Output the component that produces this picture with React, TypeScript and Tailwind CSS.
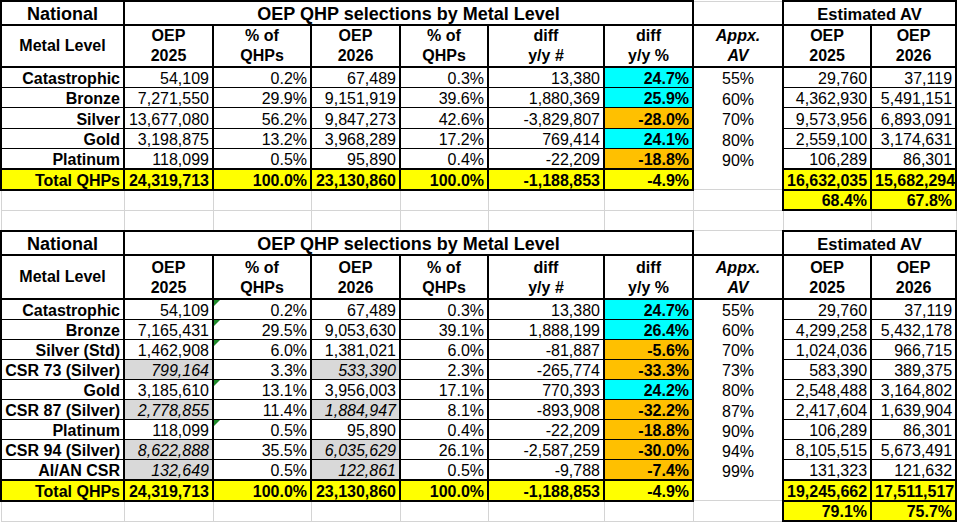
import React from 'react';

type Row = {
  label: string;
  oep25: string;
  pct25: string;
  oep26: string;
  pct26: string;
  diff: string;
  diffPct: string;
  up: boolean;
  av: string;
  est25: string;
  est26: string;
  csr?: boolean;
  flag?: boolean;
};

type Totals = {
  est25: string;
  est26: string;
  share25: string;
  share26: string;
};

const firstRows: Row[] = [
  { label: 'Catastrophic', oep25: '54,109', pct25: '0.2%', oep26: '67,489', pct26: '0.3%', diff: '13,380', diffPct: '24.7%', up: true, av: '55%', est25: '29,760', est26: '37,119' },
  { label: 'Bronze', oep25: '7,271,550', pct25: '29.9%', oep26: '9,151,919', pct26: '39.6%', diff: '1,880,369', diffPct: '25.9%', up: true, av: '60%', est25: '4,362,930', est26: '5,491,151' },
  { label: 'Silver', oep25: '13,677,080', pct25: '56.2%', oep26: '9,847,273', pct26: '42.6%', diff: '-3,829,807', diffPct: '-28.0%', up: false, av: '70%', est25: '9,573,956', est26: '6,893,091' },
  { label: 'Gold', oep25: '3,198,875', pct25: '13.2%', oep26: '3,968,289', pct26: '17.2%', diff: '769,414', diffPct: '24.1%', up: true, av: '80%', est25: '2,559,100', est26: '3,174,631' },
  { label: 'Platinum', oep25: '118,099', pct25: '0.5%', oep26: '95,890', pct26: '0.4%', diff: '-22,209', diffPct: '-18.8%', up: false, av: '90%', est25: '106,289', est26: '86,301' },
];

const secondRows: Row[] = [
  { label: 'Catastrophic', oep25: '54,109', pct25: '0.2%', oep26: '67,489', pct26: '0.3%', diff: '13,380', diffPct: '24.7%', up: true, av: '55%', est25: '29,760', est26: '37,119', flag: true },
  { label: 'Bronze', oep25: '7,165,431', pct25: '29.5%', oep26: '9,053,630', pct26: '39.1%', diff: '1,888,199', diffPct: '26.4%', up: true, av: '60%', est25: '4,299,258', est26: '5,432,178', flag: true },
  { label: 'Silver (Std)', oep25: '1,462,908', pct25: '6.0%', oep26: '1,381,021', pct26: '6.0%', diff: '-81,887', diffPct: '-5.6%', up: false, av: '70%', est25: '1,024,036', est26: '966,715', flag: true },
  { label: 'CSR 73 (Silver)', oep25: '799,164', pct25: '3.3%', oep26: '533,390', pct26: '2.3%', diff: '-265,774', diffPct: '-33.3%', up: false, av: '73%', est25: '583,390', est26: '389,375', csr: true },
  { label: 'Gold', oep25: '3,185,610', pct25: '13.1%', oep26: '3,956,003', pct26: '17.1%', diff: '770,393', diffPct: '24.2%', up: true, av: '80%', est25: '2,548,488', est26: '3,164,802', flag: true },
  { label: 'CSR 87 (Silver)', oep25: '2,778,855', pct25: '11.4%', oep26: '1,884,947', pct26: '8.1%', diff: '-893,908', diffPct: '-32.2%', up: false, av: '87%', est25: '2,417,604', est26: '1,639,904', csr: true },
  { label: 'Platinum', oep25: '118,099', pct25: '0.5%', oep26: '95,890', pct26: '0.4%', diff: '-22,209', diffPct: '-18.8%', up: false, av: '90%', est25: '106,289', est26: '86,301', flag: true },
  { label: 'CSR 94 (Silver)', oep25: '8,622,888', pct25: '35.5%', oep26: '6,035,629', pct26: '26.1%', diff: '-2,587,259', diffPct: '-30.0%', up: false, av: '94%', est25: '8,105,515', est26: '5,673,491', csr: true },
  { label: 'AI/AN CSR', oep25: '132,649', pct25: '0.5%', oep26: '122,861', pct26: '0.5%', diff: '-9,788', diffPct: '-7.4%', up: false, av: '99%', est25: '131,323', est26: '121,632', csr: true },
];

// cell styles
const head = 'border-2 border-black font-bold text-center align-bottom leading-[20px] px-[2px]';
const cell = 'border-x-2 border-y border-black text-right align-bottom leading-[17px] px-[3px] whitespace-nowrap';
const totalCell = 'border-2 border-black bg-[#ffff00] font-bold text-right align-bottom leading-[17px] px-[3px] whitespace-nowrap';
const blank = 'border border-[#d4d4d4]';

const widths = ['w-[123px]', 'w-[89px]', 'w-[98px]', 'w-[89px]', 'w-[88px]', 'w-[116px]', 'w-[89px]', 'w-[90px]', 'w-[88px]', 'w-[85px]'];

const Flag = () => (
  <span className="absolute left-0 top-0 h-0 w-0 border-t-[6px] border-r-[6px] border-t-[#1f8a2a] border-r-transparent" />
);

const Header = ({ tall }: { tall: boolean }) => (
  <>
    <tr className="h-[24px]">
      <td className={`${head} text-[18px]`}>National</td>
      <td colSpan={6} className={`${head} text-[18px]`}>OEP QHP selections by Metal Level</td>
      <td className="border-x-2 border-b-2 border-black border-t border-t-[#d4d4d4]"></td>
      <td colSpan={2} className={`${head} text-[16.5px]`}>Estimated AV</td>
    </tr>
    <tr className={tall ? 'h-[44px]' : 'h-[42px]'}>
      <td className={`${head} align-middle`}>Metal Level</td>
      <td className={head}>OEP<br />2025</td>
      <td className={head}>% of<br />QHPs</td>
      <td className={head}>OEP<br />2026</td>
      <td className={head}>% of<br />QHPs</td>
      <td className={head}>diff<br />y/y #</td>
      <td className={head}>diff<br />y/y %</td>
      <td className={`${head} italic`}>Appx.<br />AV</td>
      <td className={head}>OEP<br />2025</td>
      <td className={head}>OEP<br />2026</td>
    </tr>
  </>
);

const DataRow = ({ row, height }: { row: Row; height: string }) => (
  <tr className={height}>
    <td className={`${cell} font-bold`}>{row.label}</td>
    <td className={`${cell} ${row.csr ? 'bg-[#d9d9d9] italic' : ''}`}>{row.oep25}</td>
    <td className={`${cell} relative`}>
      {row.flag && <Flag />}
      {row.pct25}
    </td>
    <td className={`${cell} ${row.csr ? 'bg-[#d9d9d9] italic' : ''}`}>{row.oep26}</td>
    <td className={cell}>{row.pct26}</td>
    <td className={cell}>{row.diff}</td>
    <td className={`${cell} font-bold ${row.up ? 'bg-[#00ffff]' : 'bg-[#ffc000]'}`}>{row.diffPct}</td>
    <td className="border-x-2 border-black text-center align-bottom leading-[17px]">{row.av}</td>
    <td className={cell}>{row.est25}</td>
    <td className={cell}>{row.est26}</td>
  </tr>
);

const TotalRows = ({ t }: { t: Totals }) => (
  <>
    <tr className="h-[21px]">
      <td className={totalCell}>Total QHPs</td>
      <td className={totalCell}>24,319,713</td>
      <td className={totalCell}>100.0%</td>
      <td className={totalCell}>23,130,860</td>
      <td className={totalCell}>100.0%</td>
      <td className={totalCell}>-1,188,853</td>
      <td className={totalCell}>-4.9%</td>
      <td className="bg-white"></td>
      <td className={totalCell}>{t.est25}</td>
      <td className={totalCell}>{t.est26}</td>
    </tr>
    <tr className="h-[20.5px]">
      {[0, 1, 2, 3, 4, 5, 6, 7].map((i) => (
        <td key={i} className={blank}></td>
      ))}
      <td className={totalCell}>{t.share25}</td>
      <td className={totalCell}>{t.share26}</td>
    </tr>
  </>
);

const BlankRow = () => (
  <tr className="h-[20.5px]">
    {widths.map((w) => (
      <td key={w + 'b'} className={blank}></td>
    ))}
  </tr>
);

export default function App() {
  return (
    <div className="h-[522px] w-[960px] overflow-hidden bg-white font-['Liberation_Sans',Arial,sans-serif] text-[16px] text-black">
      <table className="w-[955px] table-fixed border-collapse">
        <colgroup>
          {widths.map((w, i) => (
            <col key={i} className={w} />
          ))}
        </colgroup>
        <tbody>
          <Header tall={false} />
          {firstRows.map((r) => (
            <DataRow key={'a' + r.label} row={r} height="h-[20.4px]" />
          ))}
          <TotalRows t={{ est25: '16,632,035', est26: '15,682,294', share25: '68.4%', share26: '67.8%' }} />
          <BlankRow />

          <Header tall={true} />
          {secondRows.map((r) => (
            <DataRow key={'b' + r.label} row={r} height="h-[20.1px]" />
          ))}
          <TotalRows t={{ est25: '19,245,662', est26: '17,511,517', share25: '79.1%', share26: '75.7%' }} />
          <BlankRow />
        </tbody>
      </table>
    </div>
  );
}
